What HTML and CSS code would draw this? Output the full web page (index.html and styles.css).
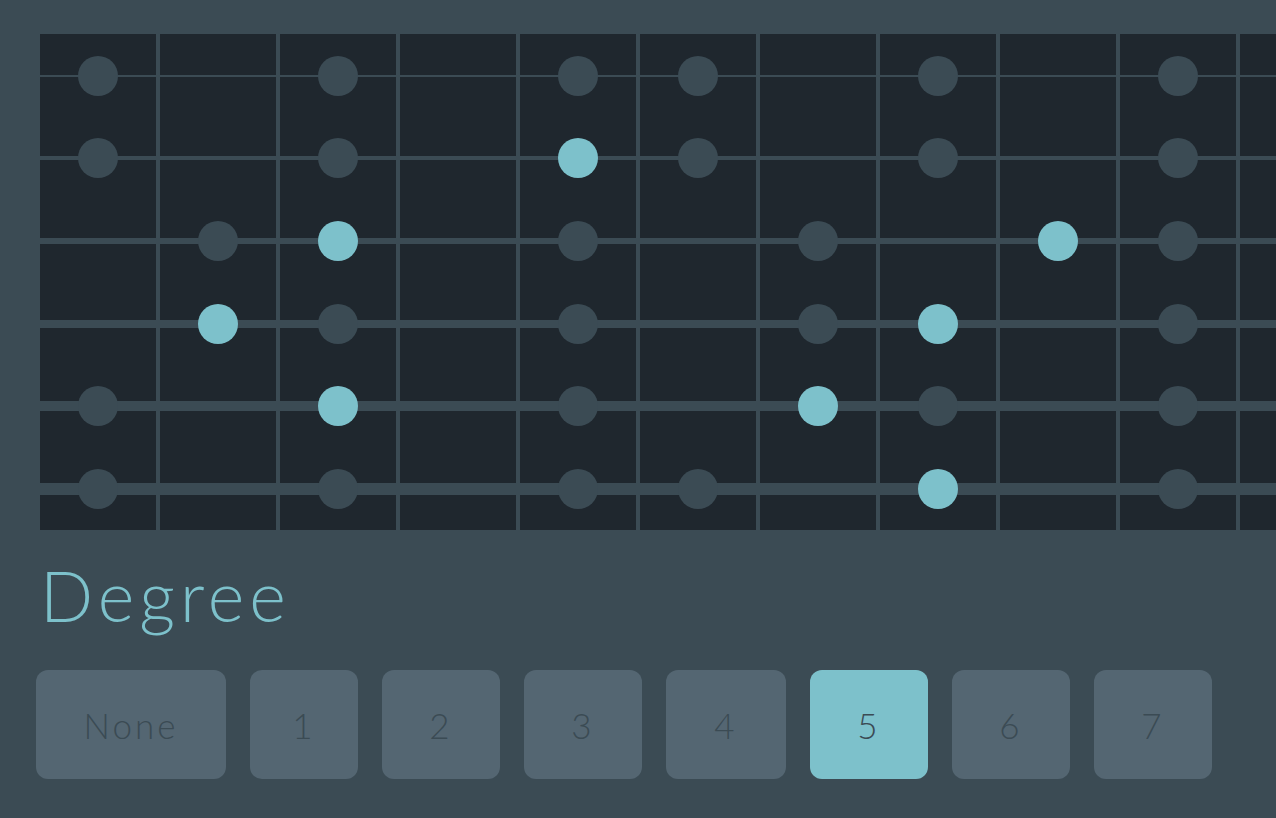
FILE: index.html
```html
<!DOCTYPE html>
<html lang="en">
<head>
<meta charset="utf-8">
<title>Degree</title>
<link rel="stylesheet" href="styles.css">
</head>
<body>
<main class="app">
  <section class="fretboard">
    <div class="string s1">
      <div class="fret"><span class="dot"></span></div>
      <div class="fret"></div>
      <div class="fret"><span class="dot"></span></div>
      <div class="fret"></div>
      <div class="fret"><span class="dot"></span></div>
      <div class="fret"><span class="dot"></span></div>
      <div class="fret"></div>
      <div class="fret"><span class="dot"></span></div>
      <div class="fret"></div>
      <div class="fret"><span class="dot"></span></div>
      <div class="fret"></div>
    </div>
    <div class="string s2">
      <div class="fret"><span class="dot"></span></div>
      <div class="fret"></div>
      <div class="fret"><span class="dot"></span></div>
      <div class="fret"></div>
      <div class="fret"><span class="dot on"></span></div>
      <div class="fret"><span class="dot"></span></div>
      <div class="fret"></div>
      <div class="fret"><span class="dot"></span></div>
      <div class="fret"></div>
      <div class="fret"><span class="dot"></span></div>
      <div class="fret"></div>
    </div>
    <div class="string s3">
      <div class="fret"></div>
      <div class="fret"><span class="dot"></span></div>
      <div class="fret"><span class="dot on"></span></div>
      <div class="fret"></div>
      <div class="fret"><span class="dot"></span></div>
      <div class="fret"></div>
      <div class="fret"><span class="dot"></span></div>
      <div class="fret"></div>
      <div class="fret"><span class="dot on"></span></div>
      <div class="fret"><span class="dot"></span></div>
      <div class="fret"></div>
    </div>
    <div class="string s4">
      <div class="fret"></div>
      <div class="fret"><span class="dot on"></span></div>
      <div class="fret"><span class="dot"></span></div>
      <div class="fret"></div>
      <div class="fret"><span class="dot"></span></div>
      <div class="fret"></div>
      <div class="fret"><span class="dot"></span></div>
      <div class="fret"><span class="dot on"></span></div>
      <div class="fret"></div>
      <div class="fret"><span class="dot"></span></div>
      <div class="fret"></div>
    </div>
    <div class="string s5">
      <div class="fret"><span class="dot"></span></div>
      <div class="fret"></div>
      <div class="fret"><span class="dot on"></span></div>
      <div class="fret"></div>
      <div class="fret"><span class="dot"></span></div>
      <div class="fret"></div>
      <div class="fret"><span class="dot on"></span></div>
      <div class="fret"><span class="dot"></span></div>
      <div class="fret"></div>
      <div class="fret"><span class="dot"></span></div>
      <div class="fret"></div>
    </div>
    <div class="string s6">
      <div class="fret"><span class="dot"></span></div>
      <div class="fret"></div>
      <div class="fret"><span class="dot"></span></div>
      <div class="fret"></div>
      <div class="fret"><span class="dot"></span></div>
      <div class="fret"><span class="dot"></span></div>
      <div class="fret"></div>
      <div class="fret"><span class="dot on"></span></div>
      <div class="fret"></div>
      <div class="fret"><span class="dot"></span></div>
      <div class="fret"></div>
    </div>
  </section>

  <h1 class="title">Degree</h1>

  <div class="degrees">
    <button class="btn btn-none">None</button>
    <button class="btn btn-one">1</button>
    <button class="btn">2</button>
    <button class="btn">3</button>
    <button class="btn btn-four">4</button>
    <button class="btn active">5</button>
    <button class="btn">6</button>
    <button class="btn">7</button>
  </div>
</main>
</body>
</html>
```

FILE: styles.css
```css
* { box-sizing: border-box; }

html, body {
  margin: 0;
  height: 100%;
}

body {
  background: #3b4b54;
  overflow: hidden;
  font-family: "Lato", "Noto Sans", sans-serif;
}

.app {
  padding: 34px 0 0 40px;
  width: 1276px;
  height: 818px;
  overflow: hidden;
}

.fretboard {
  display: grid;
  grid-template-rows: repeat(6, 1fr);
  height: 496px;
  width: 1320px;
  background: #1f272e;
}

.string {
  --t: 2px;
  display: flex;
  background: linear-gradient(to bottom,
    transparent calc(50% - var(--t) / 2),
    #3b4b54 calc(50% - var(--t) / 2),
    #3b4b54 calc(50% + var(--t) / 2),
    transparent calc(50% + var(--t) / 2));
}
.s1 { --t: 2px; }
.s2 { --t: 4px; }
.s3 { --t: 6px; }
.s4 { --t: 8px; }
.s5 { --t: 10px; }
.s6 { --t: 12px; }

.fret {
  flex: 0 0 120px;
  border-right: 4px solid #3b4b54;
  display: flex;
  align-items: center;
  justify-content: center;
  padding-top: 1px;
}

.dot {
  width: 40px;
  height: 40px;
  border-radius: 50%;
  background: #3b4b54;
}
.dot.on { background: #7dc1cb; }

.title {
  margin: 30px 0 0 0;
  font-size: 70px;
  line-height: 1;
  font-weight: 300;
  letter-spacing: 5px;
  color: #7dc1cb;
  height: 70px;
}

.degrees {
  display: flex;
  gap: 24px;
  margin: 40px 0 0 -4px;
}

.btn {
  width: 118px;
  height: 109px;
  border: 0;
  border-radius: 12px;
  background: #546672;
  color: #3b4b54;
  font-family: "Lato", "Noto Sans", sans-serif;
  font-weight: 300;
  font-size: 35px;
  letter-spacing: 3px;
  padding: 0;
  display: flex;
  align-items: center;
  justify-content: center;
}
.btn-none { width: 190px; }
.btn-one { width: 108px; }
.btn-four { width: 120px; }
.btn.active { background: #7dc1cb; }
```
